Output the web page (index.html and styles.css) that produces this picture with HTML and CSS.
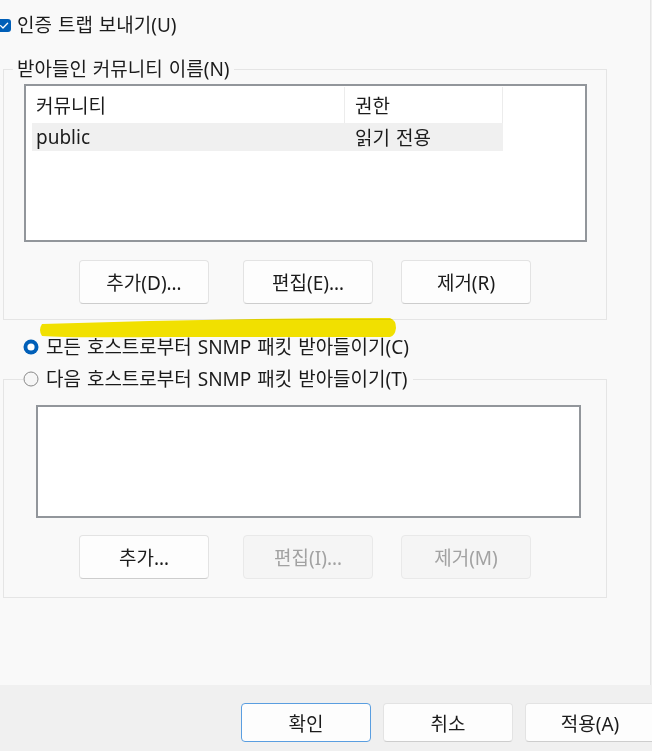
FILE: index.html
```html
<!DOCTYPE html>
<html lang="ko">
<head>
  <meta charset="UTF-8" />
  <meta name="viewport" content="width=device-width, initial-scale=1.0"/>
  <title>SNMP 보안</title>
  <link rel="stylesheet" href="styles.css">
</head>
<body>
  <div class="panel">
    <label class="check-row">
      <svg class="checkbox" width="14" height="13" viewBox="0 0 14 13">
        <rect x="0" y="0" width="14" height="13" rx="3" fill="#005fb8"/>
        <path d="M3.6 6.6 L6 9 L10.6 4.2" fill="none" stroke="#fff" stroke-width="1.3" stroke-linecap="round" stroke-linejoin="round"/>
      </svg>
      인증 트랩 보내기(U)
    </label>

    <fieldset class="group group-community">
      <legend class="group-title">받아들인 커뮤니티 이름(N)</legend>
      <div class="listbox community-list">
        <div class="list-head">
          <span class="cell-name">커뮤니티</span>
          <span class="cell-perm">권한</span>
        </div>
        <div class="list-row">
          <span class="cell-name">public</span>
          <span class="cell-perm">읽기 전용</span>
        </div>
      </div>
      <div class="btn-row">
        <button class="btn">추가(D)…</button>
        <button class="btn">편집(E)…</button>
        <button class="btn">제거(R)</button>
      </div>
    </fieldset>

    <label class="radio-row radio-all">
      <svg class="radio" width="16" height="16" viewBox="0 0 16 16">
        <circle cx="8" cy="8" r="7.5" fill="#005fb8"/>
        <circle cx="8" cy="8" r="3.6" fill="#fff"/>
      </svg>
      모든 호스트로부터 SNMP 패킷 받아들이기(C)
    </label>

    <fieldset class="group group-hosts">
      <legend class="radio-legend">
        <label class="radio-row">
          <svg class="radio" width="16" height="16" viewBox="0 0 16 16">
            <circle cx="8" cy="8" r="7" fill="#f6f6f6" stroke="#8a8a8a" stroke-width="1"/>
          </svg>
          다음 호스트로부터 SNMP 패킷 받아들이기(T)
        </label>
      </legend>
      <div class="listbox host-list"></div>
      <div class="btn-row">
        <button class="btn">추가…</button>
        <button class="btn" disabled>편집(I)…</button>
        <button class="btn" disabled>제거(M)</button>
      </div>
    </fieldset>

    <!-- marker stroke drawn over the screenshot -->
    <svg class="marker" width="362" height="26" viewBox="0 0 362 26">
      <path d="M4 8 Q180 2 352 2 Q358 4 358 12 Q357 20 352 21 L120 21 Q30 22 4 20 Q0 14 4 8 Z" fill="#f7e600"/>
    </svg>
  </div>

  <div class="footer">
    <button class="btn btn-default">확인</button>
    <button class="btn">취소</button>
    <button class="btn">적용(A)</button>
  </div>
</body>
</html>
```

FILE: styles.css
```css
* { box-sizing: border-box; }
html, body { margin: 0; height: 100%; overflow: hidden; }
body { background: #f0f0f0; font-family: "Noto Sans", "Noto Sans CJK KR", sans-serif; font-size: 19px; word-spacing: 1px; color: #1b1b1b; }

.panel { position: relative; width: 651px; height: 685px; padding-top: 13px; background: #f9f9f9; border-right: 1px solid #e5e5e5; }

.check-row { display: flex; align-items: center; gap: 6px; height: 24px; line-height: 24px; margin-left: -3px; }

.group { width: 604px; margin: 20px 0 0 3px; padding: 0 0 15px; border: 1px solid #e5e5e5; min-width: 0; }
.group-title { margin-left: 9px; padding: 0 4px; line-height: 24px; }

.listbox { background: #fff; border: 2px solid #92969b; }
.community-list { width: 563px; height: 158px; margin: 3px 0 0 20px; padding: 1px 0 0 6px; }
.host-list { width: 545px; height: 113px; margin: 14px 0 0 32px; }

.list-head, .list-row { display: flex; }
.list-head { height: 36px; }
.list-row { height: 28px; width: 471px; background: #f0f0f0; }
.cell-name, .cell-perm { display: flex; align-items: center; }
.cell-name { width: 313px; padding-left: 4px; }
.cell-perm { width: 158px; padding-left: 10px; }
.list-head span { border-right: 1px solid #ececec; }

.btn-row { display: flex; gap: 28px; margin: 18px 0 0 75px; }
.btn-row .btn:first-child { margin-right: 6px; }
.group-hosts .btn-row { margin-top: 17px; }

.btn { flex-shrink: 0; width: 130px; height: 44px; padding: 0; font: inherit; color: inherit; background: #fdfdfd; border: 1px solid #e3e3e3; border-bottom-color: #cdcdcd; border-radius: 4px; }
.btn:disabled { color: #a2a2a2; background: #f5f5f5; border-color: #e9e9e9; }

.radio-row { display: flex; align-items: center; gap: 7px; height: 24px; line-height: 24px; }
.radio-all { margin: 15px 0 0 23px; }
.group-hosts { margin-top: 8px; padding-bottom: 18px; }
.radio-legend { margin-left: 19px; padding: 0 5px 0 0; line-height: 24px; }

.marker { position: absolute; left: 38px; top: 316px; mix-blend-mode: multiply; }

.footer { display: flex; gap: 12px; height: 66px; padding: 18px 0 0 241px; }
.footer .btn { height: 39px; }
.btn-default { border-color: #5a9ee0; }
```
